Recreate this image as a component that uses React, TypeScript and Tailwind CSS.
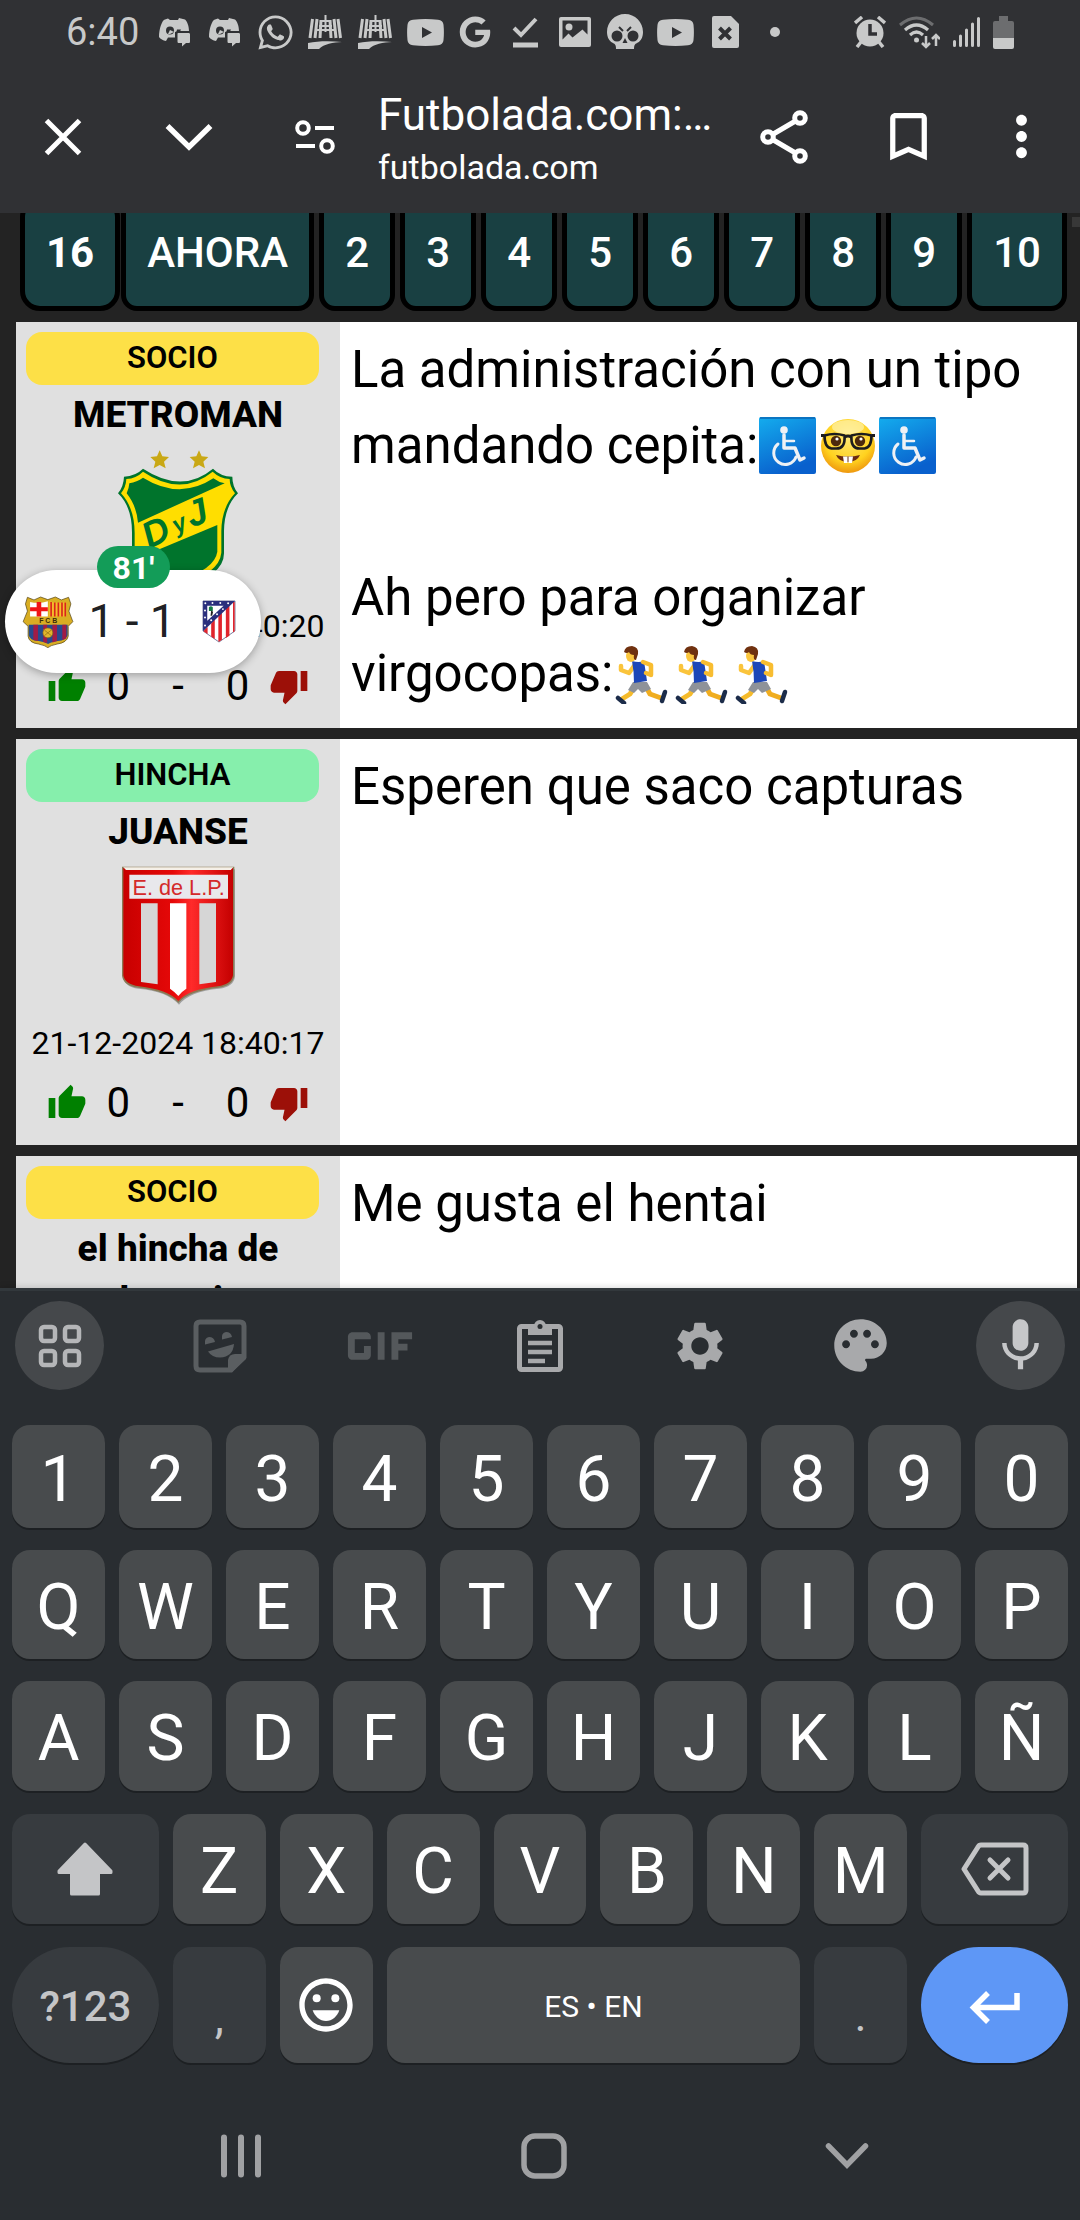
import React from "react";
import { FaGoogle, FaWhatsapp } from "react-icons/fa";
import {
  MdBookmarkBorder,
  MdGif,
  MdMic,
  MdMoreVert,
  MdOutlineEmojiEmotions,
  MdPalette,
  MdSettings,
  MdThumbDown,
  MdThumbUp,
} from "react-icons/md";

/* ---------- status bar icons ---------- */

const DiscordChat = () => (
  <svg viewBox="0 0 34 30" className="h-[30px] w-[34px]" fill="currentColor">
    <path d="M10 1.500 7 2.500C4 3 1 12 1 20c1.500 2 4 3.500 7 4l2-3.500h7V15l3-1h11C31 9 29 4 27 2.500l-6-1.500-1 2h-8z" />
    <circle cx="12" cy="13.500" r="4" fill="#303134" />
    <path d="M12 17h-2l2-4 4 2z" fill="currentColor" />
    <path d="M19 12.500h4l-2 4h-3z" fill="#303134" />
    <path d="M20 16h10.500c1 0 1.500.5 1.500 1.500v7c0 1-.5 1.500-1.500 1.500H28l-4 3.500V26h-3c-1 0-1.500-.5-1.500-1.500v-8z" />
  </svg>
);

const Bridge = () => (
  <svg viewBox="0 0 34 34" className="size-[34px]" fill="none" stroke="currentColor">
    <path d="M4.500 4 2 23M9 4 7 23M13 5l-1 18" strokeWidth="3" />
    <path d="M22 5l1 18M26 4l2 19M30 4l2.500 19" strokeWidth="3" />
    <path d="M17.500 0v17M9 15h17M14 6h7M11 11h13" strokeWidth="2" />
    <path d="M0 28c10-2 22-2 34-1-9 .5-18 2-23 7H0z" fill="currentColor" stroke="none" />
  </svg>
);

const Play = () => (
  <svg viewBox="0 0 37 27" className="h-[27px] w-[37px]" fill="currentColor">
    <path fillRule="evenodd" d="M6 .7Q18.500-.7 31 .7q5 .3 5.500 5 .8 7.800 0 15.600-.5 4.700-5.500 5-12.500 1.400-25 0-5-.3-5.500-5-.8-7.800 0-15.600Q1 1 6 .7zM15 8v11l10-5.500z" />
  </svg>
);

const CheckLine = () => (
  <svg viewBox="0 0 27 32" className="h-8 w-[27px]" fill="none" stroke="currentColor">
    <path d="m2 12 7 7L24 3" strokeWidth="4" />
    <path d="M1 29h25" strokeWidth="5" />
  </svg>
);

const Picture = () => (
  <svg viewBox="0 0 32 30" className="h-[30px] w-8" fill="currentColor">
    <path fillRule="evenodd" d="M2 0h28q2 0 2 2v26q0 2-2 2H2q-2 0-2-2V2q0-2 2-2zm1.500 3.500v19l6-6 4 4 10-8 5 5v-14z" />
    <circle cx="10" cy="10" r="3.500" />
  </svg>
);

const Skull = () => (
  <svg viewBox="0 0 36 36" className="size-9" fill="currentColor">
    <path d="M18 0c10 0 18 8 18 18 0 5-2 9-6 11-2 1-3 2-3 6H9c0-4-1-5-3-6-4-2-6-6-6-11C0 8 8 0 18 0z" />
    <circle cx="10" cy="22" r="5.500" fill="#303134" />
    <circle cx="26" cy="22" r="5.500" fill="#303134" />
    <path d="m18 24 2.500 5h-5z" fill="#303134" />
    <path d="m12 13 4 4M24 13l-4 4" stroke="#303134" strokeWidth="2" />
  </svg>
);

const DocX = () => (
  <svg viewBox="0 0 27 32" className="h-8 w-[27px]" fill="currentColor">
    <path d="M2 0h17l8 8v22q0 2-2 2H2q-2 0-2-2V2q0-2 2-2z" />
    <path d="m7.500 12 11 11m0-11-11 11" stroke="#303134" strokeWidth="4" />
  </svg>
);

const Alarm = () => (
  <svg viewBox="0 0 32 32" className="size-8" fill="currentColor">
    <circle cx="16" cy="17" r="13.500" />
    <path d="m1 7 7-6M31 7l-7-6M3 31l4-5M29 31l-4-5" stroke="currentColor" strokeWidth="3.500" />
    <path d="M16 8v10h7" stroke="#303134" strokeWidth="3.500" fill="none" />
  </svg>
);

const Wifi = () => (
  <svg viewBox="0 0 41 33" className="h-[33px] w-[41px]" fill="none" stroke="currentColor">
    <path d="M1 9Q17.500-5 34 9" strokeWidth="3" opacity=".4" />
    <path d="M6 14q11.500-10 23 0M11 19q6.500-6 13 0" strokeWidth="3.200" />
    <circle cx="17.500" cy="24" r="2.500" fill="currentColor" stroke="none" />
    <path d="M27 20v11m-4-4 4 4 4-4M37 30V19m-4 4 4-4 4 4" strokeWidth="2.500" />
  </svg>
);

const Signal = () => (
  <svg viewBox="0 0 27 30" className="h-[30px] w-[27px]" stroke="currentColor" strokeWidth="3" strokeLinecap="round">
    <path d="M1.500 24.500v4M7.500 19v9.500M13.500 13v15.500M19.500 7v21.500M25.500 1.500v27" />
  </svg>
);

const Battery = () => (
  <svg viewBox="0 0 21 33" className="h-[33px] w-[21px]" fill="currentColor">
    <path d="M6 0h9v5h4q2 0 2 2v15H0V7q0-2 2-2h4z" opacity=".4" />
    <path d="M0 22h21v9q0 2-2 2H2q-2 0-2-2z" />
  </svg>
);

const Dot = () => <span className="size-2.5 rounded-full bg-current" />;

/* ---------- browser bar icons ---------- */

const Close = () => (
  <svg viewBox="0 0 40 40" className="size-10" stroke="currentColor" strokeWidth="5">
    <path d="m3.500 3.500 33 33m0-33-33 33" />
  </svg>
);

const Chevron = () => (
  <svg viewBox="0 0 48 30" className="h-[30px] w-12" fill="none" stroke="currentColor" strokeWidth="5.500">
    <path d="m2.500 4 21.500 21L45.500 4" />
  </svg>
);

const Tune = () => (
  <svg viewBox="0 0 40 34" className="h-[34px] w-10" fill="none" stroke="currentColor" strokeWidth="4">
    <circle cx="8" cy="8" r="5.800" />
    <circle cx="32" cy="26" r="5.800" />
    <path d="M20 8h19M1 26h19" />
  </svg>
);

const Share = () => (
  <svg viewBox="0 0 48 54" className="h-[54px] w-12" fill="none" stroke="currentColor" strokeWidth="5">
    <circle cx="8" cy="27" r="5.300" />
    <circle cx="40" cy="8" r="5.300" />
    <circle cx="40" cy="46" r="5.300" />
    <path d="m12.500 24.500 23-13.500m-23 18.500 23 13.500" />
  </svg>
);

/* ---------- crests ---------- */

const DefensaCrest = () => (
  <svg viewBox="354 387 360 420" className="h-[140px] w-[120px]" role="img" aria-label="Defensa y Justicia">
    <g fill="#c9a815">
      <path d="m479 388 8 18 20 2-15 14 5 20-18-10-18 10 5-20-15-14 20-2z" />
      <path d="m597 388 8 18 20 2-15 14 5 20-18-10-18 10 5-20-15-14 20-2z" />
    </g>
    <path d="M429 443q-22 22-57 24-1 29-18 50 43 41 42 120v60q4 70 138 106 138-36 138-106V630q1-74 42-113-17-21-17-50-36-1-58-24-92 77-210 0z" fill="#00742c" />
    <path d="M429 452q-20 20-50 22-1 24-16 43 41 44 41 120v58q6 64 130 98 124-34 130-98V630q1-71 41-113-16-20-16-43-29-1-51-22-95 77-209 0z" fill="#ffde00" />
    <path d="M429 470q-18 13-41 17-1 15-8 30 30 38 34 88l260-118q-18-3-34-15-100 66-211-2z" fill="#00742c" />
    <path d="M652 612v80q-8 54-118 86-108-31-117-68z" fill="#00742c" />
    <g fill="#00742c" fontFamily="Liberation Sans" fontWeight="700" fontStyle="italic">
      <text transform="translate(448 684) rotate(-26)" fontSize="110">D</text>
      <text transform="translate(530 638) rotate(-26)" fontSize="72">y</text>
      <text transform="translate(574 620) rotate(-20)" fontSize="110">J</text>
    </g>
  </svg>
);

const EstudiantesCrest = () => (
  <svg viewBox="360 396 348 450" className="h-[150px] w-[116px]" role="img" aria-label="Estudiantes de La Plata">
    <defs>
      <linearGradient id="estRed" x1="0" x2="1">
        <stop offset="0" stopColor="#c80000" />
        <stop offset=".45" stopColor="#e50808" />
        <stop offset=".62" stopColor="#ff2a2a" />
        <stop offset="1" stopColor="#c40000" />
      </linearGradient>
    </defs>
    <path d="M369 418h336v322q-4 30-48 36-88 8-120 48-34-40-122-48-42-6-46-36z" fill="#777" opacity=".6" />
    <path d="M366 410h337v327q-4 30-48 36-90 10-120 46-32-36-120-46-45-6-49-36z" fill="#8a7a55" />
    <path d="M370 414h329v322q-4 27-46 33-88 10-118 44-32-34-118-44-43-6-47-33z" fill="url(#estRed)" />
    <path d="M370 412h330l-8 8H378z" fill="#f5f0e8" />
    <path d="M388 434h296v72H388z" fill="#e8e8ec" />
    <path d="M423 520h50v243l-50-7zM598 520h50v236l-50 7z" fill="#d6d6d6" />
    <path d="M510 520h49v256q-16 10-24 22-10-12-25-22z" fill="#fff" />
    <text x="536" y="495" textAnchor="middle" fontFamily="Liberation Sans" fontSize="65" fill="#d42a2a">E. de L.P.</text>
  </svg>
);

const BarcelonaCrest = () => (
  <svg viewBox="64 828 157 158" className="size-[52px]" role="img" aria-label="Barcelona">
    <path d="m80 832 20 8 20-9 22 8 23-8 18 9 22-8 7 20-6 22 12 32-14 14v30q-4 20-34 24-20 4-28 11-8-7-28-11-30-4-32-24v-30l-15-14 13-32-6-22z" fill="#d9ae23" stroke="#4a3a10" strokeWidth="2" />
    <path d="M88 846q28 6 54-2v46H88z" fill="#fff" />
    <path d="M108 846h14v44h-14zM88 862h54v12H88z" fill="#f01515" />
    <path d="M146 844q26 8 52 2v44h-52z" fill="#f4bd2a" />
    <path d="M152 846v44M163 848v42M174 848v42M185 848v42M195 848v42" stroke="#d8251d" strokeWidth="5" />
    <path d="M84 915h118v32q-4 15-30 18-20 3-29 9-10-6-29-9-28-3-30-18z" fill="#274a8e" />
    <path d="M98 915h14v50l-14-3zM128 915h12v56l-12-3zM156 915h14v50l-14 4zM186 915h12v42l-12 5z" fill="#a01c46" />
    <circle cx="142" cy="940" r="15" fill="#e2b52c" stroke="#8a6914" strokeWidth="2" />
    <path d="m132 932 20 16m0-16-20 16" stroke="#8a6914" strokeWidth="2" />
    <text x="143" y="911" textAnchor="middle" fontFamily="Liberation Sans" fontWeight="700" fontSize="21" fill="#3a2c0c">F C B</text>
  </svg>
);

const AtleticoCrest = () => (
  <svg viewBox="606 840 104 132" className="h-[43px] w-[34px]" role="img" aria-label="Atlético de Madrid">
    <path d="M609 843h98v92l-49 34-49-34z" fill="#fff" stroke="#2f3468" strokeWidth="2" />
    <path d="M611 935h12v9l-12-7zM634 912l11-12v60l-11-8zM656 888l11-12v86l-9 6-2-1zM679 866l11-12v96l-11 7zM701 846h5v90l-5 4zM611 933l12-10v20z" fill="#e0242c" />
    <path d="M609 843h98l-98 93z" fill="#2a2f7c" />
    <path d="M622 858h50l-50 46z" fill="#fff" />
    <path d="M627 862q6-5 12 0v12h-12z" fill="#157a46" />
    <path d="m634 872 6 4-3 12h-5z" fill="#222" />
    <g fill="#fff">
      <circle cx="616" cy="850" r="3" /><circle cx="638" cy="849" r="3" /><circle cx="662" cy="849" r="3" /><circle cx="686" cy="850" r="3" />
      <circle cx="615" cy="872" r="3" /><circle cx="615" cy="894" r="3" /><circle cx="615" cy="918" r="3" /><circle cx="634" cy="902" r="3" /><circle cx="652" cy="884" r="3" /><circle cx="670" cy="868" r="3" />
    </g>
  </svg>
);

/* ---------- emoji ---------- */

const emojiClass = "inline-block size-[60px] align-[-13px]";

const Wheelchair = () => (
  <svg viewBox="0 0 60 60" className={emojiClass} role="img" aria-label="♿">
    <defs>
      <linearGradient id="chairBlue" x1="0" y1="0" x2=".4" y2="1">
        <stop offset="0" stopColor="#14adee" />
        <stop offset="1" stopColor="#0960cd" />
      </linearGradient>
    </defs>
    <rect x="1" y="1" width="57" height="57" rx="2" fill="url(#chairBlue)" />
    <path d="M2 2h55" stroke="#0a67b4" strokeWidth="1.500" />
    <g fill="none" stroke="#eef1f5" strokeLinecap="round" strokeLinejoin="round">
      <circle cx="26" cy="14" r="3.800" fill="#eef1f5" stroke="none" />
      <path d="M26 19v13h11l5 12 4-2" strokeWidth="3.500" />
      <path d="M27 25h9" strokeWidth="2.500" />
      <path d="M20 28a11.500 11.500 0 1 0 18 13" strokeWidth="3" />
    </g>
  </svg>
);

const Nerd = () => (
  <svg viewBox="0 0 60 60" className={emojiClass} role="img" aria-label="🤓">
    <defs>
      <radialGradient id="faceGold" cx=".5" cy=".35" r=".68">
        <stop offset="0" stopColor="#ffe873" />
        <stop offset=".65" stopColor="#ffd21f" />
        <stop offset="1" stopColor="#ec8f0c" />
      </radialGradient>
    </defs>
    <circle cx="30" cy="30" r="27" fill="url(#faceGold)" />
    <ellipse cx="30" cy="11" rx="16" ry="7" fill="#fff6c0" opacity=".6" />
    <circle cx="18" cy="25" r="5.200" fill="#4c290c" />
    <circle cx="42" cy="25" r="5.200" fill="#4c290c" />
    <circle cx="19" cy="23" r="1.600" fill="#fff" />
    <circle cx="43" cy="23" r="1.600" fill="#fff" />
    <g fill="none" stroke="#1c1c1e" strokeWidth="2.600" strokeLinejoin="round">
      <path d="M6.500 19.500q10-3 20 0 1 13-8 13h-5q-7-1-7-13z" />
      <path d="M53.500 19.500q-10-3-20 0-1 13 8 13h5q7-1 7-13z" />
      <path d="M3 19.500h3.500M53.500 19.500H57M26.500 21q3.500-2 7 0" strokeWidth="3.200" />
    </g>
    <path d="M18 39q12 3 24 0-3 7-12 7t-12-7z" fill="#6b2c12" />
    <path d="M25 40.500h4.500V47H26zM30.500 40.500H35L34 47h-3.500z" fill="#fff" />
  </svg>
);

const Runner = () => (
  <svg viewBox="0 0 60 60" className={emojiClass} role="img" aria-label="🏃">
    <g fill="none" strokeLinecap="round" strokeLinejoin="round">
      <path d="M22 42 17 50 9 55" stroke="#f5bb2c" strokeWidth="5" />
      <path d="m32 41 5 9 11 4" stroke="#f0ad1f" strokeWidth="5" />
      <path d="m5 54 6 5" stroke="#1c2c4a" strokeWidth="4.500" />
      <path d="m52 48-3 9" stroke="#1c2c4a" strokeWidth="4.500" />
      <path d="m21 22-5 7-8-3V22" stroke="#fac43c" strokeWidth="4.500" />
    </g>
    <path d="M20 38h14l4 7-9 4-4-4-4 4-6-3z" fill="#8e9299" />
    <path d="M19 17q7 2 12 0l3 20-13 2q0-12-2-22z" fill="#1d47b8" />
    <path d="m30 18 8 3v10l-5-2" fill="none" stroke="#f8bd31" strokeWidth="4.500" strokeLinecap="round" strokeLinejoin="round" />
    <ellipse cx="18" cy="12" rx="5" ry="6" fill="#fbc63e" />
    <path d="M11 8q1-6 8-6 7 1 6 8l-2 6q-3 0-2-5-4 0-5-3-2 2-5 0z" fill="#70310f" />
  </svg>
);

/* ---------- forum ---------- */

type Post = {
  rank: "SOCIO" | "HINCHA";
  user: string;
  crest: React.ReactNode;
  date: string;
  body: React.ReactNode;
};

const posts: Post[] = [
  {
    rank: "SOCIO",
    user: "METROMAN",
    crest: <DefensaCrest />,
    date: "21-12-2024 18:40:20",
    body: (
      <>
        La administración con un tipo mandando cepita:<Wheelchair /><Nerd /><Wheelchair />
        <br />
        <br />
        Ah pero para organizar virgocopas:<Runner /><Runner /><Runner />
      </>
    ),
  },
  {
    rank: "HINCHA",
    user: "JUANSE",
    crest: <EstudiantesCrest />,
    date: "21-12-2024 18:40:17",
    body: "Esperen que saco capturas",
  },
  {
    rank: "SOCIO",
    user: "el hincha de chacarita",
    crest: null,
    date: "21-12-2024 18:40:12",
    body: "Me gusta el hentai",
  },
];

const PostCard = ({ post }: { post: Post }) => (
  <article className="flex min-h-[406px] shrink-0 bg-white">
    <div className="flex w-[324px] shrink-0 flex-col bg-[#e0e0e0] pt-2.5">
      <div
        className={
          "mr-[21px] ml-2.5 flex h-[53px] items-center justify-center rounded-2xl pb-px text-[31px] font-semibold " +
          (post.rank === "SOCIO" ? "bg-[#fde047]" : "bg-[#86efac]")
        }
      >
        {post.rank}
      </div>
      <h2 className="mt-1 px-10 text-center text-[37px] leading-[52px] font-extrabold">{post.user}</h2>
      <div className="flex h-[158px] items-center justify-center">{post.crest}</div>
      <time className="mt-1 text-center text-[32px] leading-[46px]">{post.date}</time>
      <div className="mt-3 flex h-[50px] items-center justify-center text-[42px] leading-[50px]">
        <button aria-label="Me gusta" className="text-[#008000]"><MdThumbUp className="size-10" /></button>
        <span className="ml-5">0</span>
        <span className="mx-[42px]">-</span>
        <span className="mr-5">0</span>
        <button aria-label="No me gusta" className="text-[#9c1008]"><MdThumbDown className="size-10" /></button>
      </div>
    </div>
    <p className="flex-1 px-[11px] pt-2.5 pb-4 text-[51px] leading-[76px]">{post.body}</p>
  </article>
);

const pageClass = "h-[114px] border-[5px] border-black bg-[#194042] px-[21px] pb-1 text-[42px] text-white";

/* ---------- keyboard ---------- */

const keyClass = "flex items-center justify-center rounded-[18px] shadow-[0_2px_0_#1d2023]";
const lightKey = " bg-[#484b4d] text-white";
const darkKey = " bg-[#373b3f] text-[#c4c5c7]";

const Keys = ({ chars, height }: { chars: string; height: string }) => (
  <>
    {chars.split("").map((c) => (
      <button key={c} className={keyClass + lightKey + " pt-1.5 text-[64px] leading-none " + height}>{c}</button>
    ))}
  </>
);

const toolClass = "flex size-[89px] items-center justify-center rounded-full text-[#a8a9ab]";

export default function App() {
  return (
    <div className="flex h-screen min-h-[1400px] flex-col overflow-hidden bg-[#232323] font-['Roboto',sans-serif] text-black">
      <header className="shrink-0 bg-[#303134]">
        <div className="flex h-16 items-center pr-[66px] text-[#c8c9c9]">
          <span className="w-[150px] pl-[66px] text-[38px]">6:40</span>
          {[
            <DiscordChat />,
            <DiscordChat />,
            <FaWhatsapp className="size-[39px]" />,
            <Bridge />,
            <Bridge />,
            <Play />,
            <FaGoogle className="size-8" />,
            <CheckLine />,
            <Picture />,
            <Skull />,
            <Play />,
            <DocX />,
            <Dot />,
          ].map((icon, i) => (
            <span key={i} className="flex w-[50px] justify-center">{icon}</span>
          ))}
          <div className="ml-auto flex items-center gap-[13px]">
            <Alarm />
            <Wifi />
            <Signal />
            <Battery />
          </div>
        </div>
        <div className="flex h-[149px] items-center pr-2 pb-1 text-white">
          <button aria-label="Cerrar" className="flex w-[126px] justify-center"><Close /></button>
          <button aria-label="Minimizar" className="flex w-[126px] justify-center"><Chevron /></button>
          <button aria-label="Información del sitio" className="flex w-[126px] justify-center"><Tune /></button>
          <div className="min-w-0 flex-1 pt-1.5">
            <div className="text-[44px] leading-[54px] whitespace-nowrap">Futbolada.com:…</div>
            <div className="text-[34px] leading-[50px]">futbolada.com</div>
          </div>
          <button aria-label="Compartir" className="flex w-[124px] justify-center"><Share /></button>
          <button aria-label="Guardar" className="flex w-[124px] justify-center"><MdBookmarkBorder className="size-[63px]" /></button>
          <button aria-label="Más opciones" className="flex w-[102px] justify-center"><MdMoreVert className="size-[65px]" /></button>
        </div>
      </header>

      <main className="relative min-h-0 flex-1 overflow-hidden">
        <nav className="-mt-4 flex justify-between pr-[13px] pl-5">
          <div className="flex gap-px">
            <button className={pageClass + " rounded-[20px] font-bold"}>16</button>
            <button className={pageClass + " rounded-2xl font-medium"}>AHORA</button>
          </div>
          {["2", "3", "4", "5", "6", "7", "8", "9", "10"].map((n) => (
            <button key={n} className={pageClass + " rounded-2xl font-medium"}>{n}</button>
          ))}
        </nav>
        <div className="mt-[11px] mr-[3px] ml-4 flex flex-col gap-[11px]">
          {posts.map((p) => (
            <PostCard key={p.user} post={p} />
          ))}
        </div>
        <div className="absolute top-1 right-0 h-2.5 w-2 bg-[#383838]" />

        {/* floating live score */}
        <div className="absolute top-[357px] left-[5px] flex h-[103px] w-[256px] items-center rounded-full bg-white px-[17px] shadow-[0_2px_8px_rgba(0,0,0,0.3)]">
          <BarcelonaCrest />
          <span className="flex-1 pr-3 text-center text-[46px] text-[#202124]">1 - 1</span>
          <span className="mr-2 flex"><AtleticoCrest /></span>
          <span className="absolute -top-6 left-[92px] flex h-[42px] w-[73px] items-center justify-center rounded-full bg-[#139c58] pt-0.5 text-[32px] font-bold text-white">81'</span>
        </div>
      </main>

      <section aria-label="Teclado" className="relative shrink-0 border-t-[3px] border-[#32383c] bg-[#292d31] shadow-[0_-1px_6px_rgba(0,0,0,0.15)]">
        <div className="flex justify-between px-[15px] pt-2.5">
          <button aria-label="Menú" className={toolClass + " bg-[#45484b]"}>
            <svg viewBox="0 0 44 44" className="size-11" fill="none" stroke="#b5b6b8" strokeWidth="4.500">
              <rect x="3" y="3" width="14" height="14" rx="3" />
              <rect x="27" y="3" width="14" height="14" rx="3" />
              <rect x="3" y="27" width="14" height="14" rx="3" />
              <rect x="27" y="27" width="14" height="14" rx="3" />
            </svg>
          </button>
          <button aria-label="Stickers" className={toolClass}>
            <svg viewBox="0 0 54 54" className="size-[54px]" fill="#5a5e61">
              <path d="M7 3h40q4 0 4 4v31L38 51H7q-4 0-4-4V7q0-4 4-4z" fill="none" stroke="#5a5e61" strokeWidth="5" />
              <path d="M35 53V41q1-6 7-6h11v5L39 53z" />
              <path d="M15 32.500 41 25q-1 13-14 13.500-8 0-12-6z" />
              <path d="M12 25.500q-1-7 4-7.500 5 0 6 5zM29 20.500q-1-7 4-7.500 5 0 6 5z" />
            </svg>
          </button>
          <button aria-label="GIF" className={toolClass}><MdGif className="size-[110px] shrink-0 text-[#54585b]" /></button>
          <button aria-label="Portapapeles" className={toolClass}>
            <svg viewBox="0 0 48 54" className="h-[54px] w-12" fill="none" stroke="currentColor" strokeWidth="5">
              <rect x="3.500" y="7.500" width="41" height="43" rx="2" />
              <path d="M12 16V7h6a6 6 0 0 1 12 0h6v9z" fill="currentColor" stroke="none" />
              <circle cx="24" cy="7.500" r="2.500" fill="#292d31" stroke="none" />
              <path d="M12 24h24M12 33h24M12 42h17" strokeWidth="4.500" />
            </svg>
          </button>
          <button aria-label="Ajustes" className={toolClass}><MdSettings className="size-[58px]" /></button>
          <button aria-label="Temas" className={toolClass}><MdPalette className="size-[63px]" /></button>
          <button aria-label="Dictado" className={toolClass + " bg-[#45484b]"}><MdMic className="size-[63px] text-[#c6c7c9]" /></button>
        </div>

        <div className="mt-[35px] grid grid-cols-10 gap-x-3.5 gap-y-[22px] px-3">
          <Keys chars="1234567890" height="h-[103px]" />
          <Keys chars="QWERTYUIOP" height="h-[109px]" />
          <Keys chars="ASDFGHJKLÑ" height="h-[110px]" />
        </div>
        <div className="mt-[23px] grid grid-cols-[147fr_repeat(7,93fr)_147fr] gap-x-3.5 px-3">
          <button aria-label="Mayúsculas" className={keyClass + darkKey}>
            <svg viewBox="0 0 56 54" className="h-[54px] w-14" fill="currentColor" stroke="currentColor" strokeWidth="3" strokeLinejoin="round">
              <path d="M28 2 54 29v1.500H41.500V52h-27V30.500H2V29z" />
            </svg>
          </button>
          <Keys chars="ZXCVBNM" height="h-[110px]" />
          <button aria-label="Borrar" className={keyClass + darkKey}>
            <svg viewBox="0 0 68 54" className="h-[54px] w-[68px]" fill="none" stroke="currentColor" strokeWidth="5" strokeLinejoin="round" strokeLinecap="round">
              <path d="M20 3h42q3 0 3 3v42q0 3-3 3H20q-2 0-3-2L3 27 17 5q1-2 3-2z" />
              <path d="m29 18 18 18m0-18L29 36" />
            </svg>
          </button>
        </div>
        <div className="mt-[23px] grid h-[116px] grid-cols-[147fr_93fr_93fr_414fr_93fr_147fr] gap-x-3.5 px-3">
          <button className="flex items-center justify-center rounded-full bg-[#373b3f] pt-0.5 text-[42px] font-medium text-[#c4c5c7] shadow-[0_2px_0_#1d2023]">?123</button>
          <button className={keyClass + darkKey + " pt-6 text-[46px]"}>,</button>
          <button aria-label="Emojis" className={keyClass + lightKey}><MdOutlineEmojiEmotions className="size-[64px]" /></button>
          <button className={keyClass + lightKey + " pt-0.5 text-[30px]"}>ES • EN</button>
          <button className={keyClass + darkKey + " pt-5 text-[46px]"}>.</button>
          <button aria-label="Intro" className="flex items-center justify-center rounded-full bg-[#5e97f6] pt-1 text-white shadow-[0_2px_0_#1d2023]">
            <svg viewBox="0 0 52 34" className="h-[34px] w-[52px]" fill="none" stroke="currentColor" strokeWidth="5.500">
              <path d="M48 3v14.500H5M19 3 4.500 17.500 19 32" />
            </svg>
          </button>
        </div>

        <div className="mt-[45px] flex h-[112px] items-start justify-between pt-6 pr-[210px] pl-[218px] text-[#a0a1a3]">
          <button aria-label="Recientes" className="flex h-12 w-[46px] items-center justify-center">
            <svg viewBox="0 0 42 44" className="h-11 w-[42px]" stroke="currentColor" strokeWidth="6" strokeLinecap="round">
              <path d="M4 3.500v37M21 3.500v37M38 3.500v37" />
            </svg>
          </button>
          <button aria-label="Inicio" className="flex h-12 w-[46px] items-center justify-center">
            <svg viewBox="0 0 46 46" className="size-[46px]" fill="none" stroke="currentColor" strokeWidth="5.500">
              <rect x="3" y="3" width="40" height="40" rx="11" />
            </svg>
          </button>
          <button aria-label="Ocultar teclado" className="flex h-12 w-[46px] items-center justify-center">
            <svg viewBox="0 0 44 28" className="h-7 w-11" fill="none" stroke="currentColor" strokeWidth="5.500" strokeLinecap="round">
              <path d="m3.500 4 18.500 19L40.500 4" />
            </svg>
          </button>
        </div>
      </section>
    </div>
  );
}
